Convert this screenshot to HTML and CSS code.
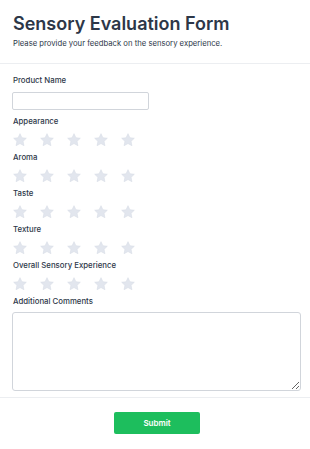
FILE: index.html
```html
<!DOCTYPE html>
<html lang="en">
<head>
  <meta charset="UTF-8">
  <meta name="viewport" content="width=device-width, initial-scale=1.0">
  <title>Sensory Evaluation Form</title>
  <link rel="stylesheet" href="styles.css">
</head>
<body>
  <header class="header">
    <h1 class="headerTitle">Sensory Evaluation Form</h1>
    <p class="headerSub">Please provide your feedback on the sensory experience.</p>
  </header>

  <main class="formBody">
    <label class="fieldLabel" for="product">Product Name</label>
    <input type="text" id="product" class="textInput" />

    <div class="fieldLabel">Appearance</div>
    <div class="stars" data-name="appearance"></div>

    <div class="fieldLabel">Aroma</div>
    <div class="stars" data-name="aroma"></div>

    <div class="fieldLabel">Taste</div>
    <div class="stars" data-name="taste"></div>

    <div class="fieldLabel">Texture</div>
    <div class="stars" data-name="texture"></div>

    <div class="fieldLabel">Overall Sensory Experience</div>
    <div class="stars" data-name="overall"></div>

    <label class="fieldLabel" for="comments">Additional Comments</label>
    <textarea id="comments" class="commentBox"></textarea>
  </main>

  <footer class="footer">
    <button class="submitBtn">Submit</button>
  </footer>

  <script>
    const starSvg = '<svg viewBox="0 0 24 24" width="16" height="16"><path d="M12 2.5l2.9 6.1 6.6.8-4.9 4.6 1.3 6.6L12 17.3l-5.9 3.3 1.3-6.6-4.9-4.6 6.6-.8z"/></svg>';

    document.querySelectorAll('.stars').forEach((row) => {
      for (let i = 0; i < 5; i++) {
        const star = document.createElement('span');
        star.className = 'star';
        star.innerHTML = starSvg;
        row.appendChild(star);
      }
    });
  </script>
</body>
</html>
```

FILE: styles.css
```css
body {
  margin: 0;
  font-family: Inter, "Liberation Sans", sans-serif;
  color: #374151;
  background: #fff;
}
.header {
  padding: 13px 12px 13px 13px;
  border-bottom: 1px solid #eceef1;
}
.headerTitle {
  margin: 0;
  font-size: 18px;
  line-height: 22px;
  font-weight: 600;
  color: #2d3748;
}
.headerSub {
  margin: 3px 0 0 0;
  font-size: 7.7px;
  line-height: 12px;
  color: #2d3748;
}
.formBody {
  padding: 10px 12px 6px 12px;
  display: flex;
  flex-direction: column;
}
.fieldLabel {
  display: block;
  font-size: 7.8px;
  line-height: 12px;
  font-weight: 500;
  color: #2d3748;
  margin: 0 0 5px 1px;
}
.textInput {
  width: 137px;
  height: 18px;
  box-sizing: border-box;
  border: 1px solid #d1d5db;
  border-radius: 2px;
  margin: 1px 0 5px 0;
}
.stars {
  display: flex;
  gap: 11px;
  margin-bottom: 3px;
}
.star {
  display: block;
  width: 16px;
  height: 16px;
}
.star svg {
  display: block;
  fill: #e2e6ee;
  stroke: #d6dbe4;
  stroke-width: 0.8;
  stroke-linejoin: round;
}
.commentBox {
  width: 289px;
  height: 79px;
  box-sizing: border-box;
  border: 1px solid #d1d5db;
  border-radius: 3px;
  margin: 0;
}
.footer {
  border-top: 1px solid #eceef1;
  display: flex;
  justify-content: center;
  padding: 14px 0 14px 4px;
}
.submitBtn {
  background-color: #1dbe5d;
  border: none;
  border-radius: 2px;
  height: 22px;
  width: 86px;
  color: white;
  font-family: Inter, "Liberation Sans", sans-serif;
  font-size: 8px;
  font-weight: 600;
  cursor: pointer;
}
```
